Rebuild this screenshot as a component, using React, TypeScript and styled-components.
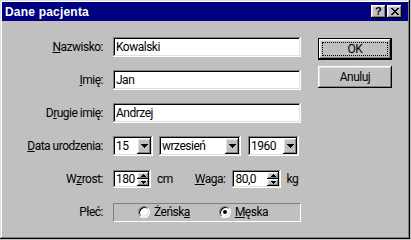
import React from "react";
import styled, { createGlobalStyle } from "styled-components";

const GlobalStyle = createGlobalStyle`
  html, body { margin: 0; padding: 0; background: #c0c0c0; }
  body {
    font-family: Roboto, "Liberation Sans", Arial, sans-serif;
    font-size: 12px;
    letter-spacing: -0.5px;
    color: #000;
  }
`;

const raisedShadow =
  "inset -1px -1px #000, inset 1px 1px #fff, inset -2px -2px #808080, inset 2px 2px #dfdfdf";
const sunkenShadow =
  "inset -1px -1px #fff, inset 1px 1px #808080, inset -2px -2px #dfdfdf, inset 2px 2px #000";

const Window = styled.div`
  box-sizing: border-box;
  width: 410px;
  height: 239px;
  padding: 2px;
  background: #c0c0c0;
  box-shadow: inset -1px -1px #000, inset 1px 1px #dfdfdf, inset -2px -2px #808080,
    inset 2px 2px #fff;
  display: flex;
  flex-direction: column;
`;

const TitleBar = styled.div`
  height: 19px;
  flex: none;
  background: #000080;
  color: #fff;
  display: flex;
  align-items: center;
  padding: 0 6px 0 3px;
  font-family: "Liberation Sans", Arial, sans-serif;
  font-weight: bold;
  font-size: 12px;
  letter-spacing: 0.2px;
`;

const TitleText = styled.span`
  flex: 1;
`;

const CaptionButtons = styled.div`
  display: flex;
  gap: 1px;
`;

const CaptionButton = styled.div`
  box-sizing: border-box;
  width: 15px;
  height: 13px;
  background: #c0c0c0;
  box-shadow: ${raisedShadow};
  display: flex;
  align-items: center;
  justify-content: center;
  color: #000;
  font-weight: bold;
  font-size: 11px;
  line-height: 1;
  padding-bottom: 1px;
`;

const Body = styled.div`
  flex: 1;
  display: flex;
  align-items: flex-start;
  padding-top: 16px;
`;

const Form = styled.div`
  display: grid;
  grid-template-columns: 101px 188px;
  grid-auto-rows: 20px;
  column-gap: 10px;
  row-gap: 13px;
  align-items: center;
`;

const Label = styled.div`
  text-align: right;
  white-space: nowrap;
`;

const TextBox = styled.div`
  box-sizing: border-box;
  height: 20px;
  background: #fff;
  box-shadow: ${sunkenShadow};
  padding: 0 3px;
  display: flex;
  align-items: center;
  white-space: nowrap;
`;

const Inline = styled.div`
  display: flex;
  align-items: center;
`;

const Combo = styled.div<{ $w: number; $gap?: number }>`
  box-sizing: border-box;
  width: ${(p) => p.$w}px;
  height: 20px;
  margin-left: ${(p) => p.$gap ?? 0}px;
  background: #fff;
  box-shadow: ${sunkenShadow};
  padding: 2px;
  display: flex;
  align-items: center;
`;

const FieldValue = styled.span`
  flex: 1;
  padding-left: 1px;
  white-space: nowrap;
  overflow: hidden;
`;

const DropButton = styled.div`
  box-sizing: border-box;
  width: 14px;
  height: 16px;
  background: #c0c0c0;
  box-shadow: ${raisedShadow};
  display: flex;
  align-items: center;
  justify-content: center;
`;

const Spin = styled.div<{ $w: number }>`
  box-sizing: border-box;
  width: ${(p) => p.$w}px;
  height: 18px;
  background: #fff;
  box-shadow: ${sunkenShadow};
  padding: 2px;
  display: flex;
  align-items: center;
`;

const SpinButtons = styled.div`
  width: 12px;
  height: 14px;
  display: flex;
  flex-direction: column;
`;

const SpinHalf = styled.div`
  box-sizing: border-box;
  flex: 1;
  background: #c0c0c0;
  box-shadow: ${raisedShadow};
  display: flex;
  align-items: center;
  justify-content: center;
`;

const Unit = styled.span<{ $gap: number }>`
  margin-left: ${(p) => p.$gap}px;
  white-space: nowrap;
`;

const InlineLabel = styled.span<{ $gap: number }>`
  margin-left: ${(p) => p.$gap}px;
  margin-right: 7px;
  white-space: nowrap;
`;

const RadioGroup = styled.div`
  box-sizing: border-box;
  height: 19px;
  border-top: 1px solid #808080;
  border-left: 1px solid #808080;
  border-bottom: 1px solid #fff;
  border-right: 1px solid #fff;
  display: flex;
  align-items: center;
  padding-left: 24px;
  gap: 29px;
`;

const RadioOption = styled.div`
  display: flex;
  align-items: center;
  gap: 4px;
  white-space: nowrap;
`;

const RadioCircle = styled.span<{ $checked?: boolean }>`
  box-sizing: border-box;
  width: 12px;
  height: 12px;
  border-radius: 50%;
  background: #fff;
  border: 1px solid;
  border-color: #808080 #fff #fff #808080;
  box-shadow: inset 1px 1px #000, inset -1px -1px #dfdfdf;
  display: flex;
  align-items: center;
  justify-content: center;
  &::after {
    content: "";
    display: ${(p) => (p.$checked ? "block" : "none")};
    width: 4px;
    height: 4px;
    border-radius: 50%;
    background: #000;
  }
`;

const ButtonColumn = styled.div`
  margin-left: 17px;
  margin-top: 1px;
  display: flex;
  flex-direction: column;
  gap: 6px;
`;

const Button = styled.div<{ $default?: boolean }>`
  box-sizing: border-box;
  width: 74px;
  height: 22px;
  background: #c0c0c0;
  box-shadow: ${(p) =>
    p.$default
      ? "inset 0 0 0 1px #000, inset -2px -2px #000, inset 2px 2px #fff, inset -3px -3px #808080, inset 3px 3px #dfdfdf"
      : raisedShadow};
  display: flex;
  align-items: stretch;
  justify-content: stretch;
  padding: 4px;
`;

const ButtonFace = styled.span<{ $focus?: boolean }>`
  flex: 1;
  box-sizing: border-box;
  border: 1px dotted ${(p) => (p.$focus ? "#000" : "transparent")};
  display: flex;
  align-items: center;
  justify-content: center;
`;

const DownArrow = () => (
  <svg width="7" height="4" viewBox="0 0 7 4" shapeRendering="crispEdges">
    <path d="M0 0h7v1h-1v1h-1v1h-1v1h-1v-1h-1v-1h-1v-1h-1z" fill="#000" />
  </svg>
);

const SpinArrow = ({ up }: { up?: boolean }) => (
  <svg width="5" height="3" viewBox="0 0 5 3" shapeRendering="crispEdges">
    {up ? (
      <path d="M2 0h1v1h1v1h1v1h-5v-1h1v-1h1z" fill="#000" />
    ) : (
      <path d="M0 0h5v1h-1v1h-1v1h-1v-1h-1v-1h-1z" fill="#000" />
    )}
  </svg>
);

const closeRows = [
  "11000011",
  "01100110",
  "00111100",
  "00011000",
  "00111100",
  "01100110",
  "11000011",
];

const CloseGlyph = () => (
  <svg width="8" height="7" viewBox="0 0 8 7" shapeRendering="crispEdges">
    {closeRows.map((row, y) =>
      row.split("").map((c, x) =>
        c === "1" ? <rect key={`${x}-${y}`} x={x} y={y} width="1" height="1" fill="#000" /> : null
      )
    )}
  </svg>
);

const ComboBox = ({ value, w, gap }: { value: string; w: number; gap?: number }) => (
  <Combo $w={w} $gap={gap}>
    <FieldValue>{value}</FieldValue>
    <DropButton>
      <DownArrow />
    </DropButton>
  </Combo>
);

const SpinBox = ({ value, w }: { value: string; w: number }) => (
  <Spin $w={w}>
    <FieldValue>{value}</FieldValue>
    <SpinButtons>
      <SpinHalf>
        <SpinArrow up />
      </SpinHalf>
      <SpinHalf>
        <SpinArrow />
      </SpinHalf>
    </SpinButtons>
  </Spin>
);

export default function App() {
  return (
    <>
      <GlobalStyle />
      <Window>
        <TitleBar>
          <TitleText>Dane pacjenta</TitleText>
          <CaptionButtons>
            <CaptionButton>?</CaptionButton>
            <CaptionButton>
              <CloseGlyph />
            </CaptionButton>
          </CaptionButtons>
        </TitleBar>
        <Body>
          <Form>
            <Label>
              <u>N</u>azwisko:
            </Label>
            <TextBox>Kowalski</TextBox>

            <Label>
              <u>I</u>mię:
            </Label>
            <TextBox>Jan</TextBox>

            <Label>
              D<u>r</u>ugie imię:
            </Label>
            <TextBox>Andrzej</TextBox>

            <Label>
              <u>D</u>ata urodzenia:
            </Label>
            <Inline>
              <ComboBox value="15" w={40} />
              <ComboBox value="wrzesień" w={82} gap={6} />
              <ComboBox value="1960" w={51} gap={7} />
            </Inline>

            <Label>
              W<u>z</u>rost:
            </Label>
            <Inline>
              <SpinBox value="180" w={38} />
              <Unit $gap={6}>cm</Unit>
              <InlineLabel $gap={22}>
                <u>W</u>aga:
              </InlineLabel>
              <SpinBox value="80,0" w={49} />
              <Unit $gap={5}>kg</Unit>
            </Inline>

            <Label>Płeć:</Label>
            <RadioGroup>
              <RadioOption>
                <RadioCircle />
                <span>
                  Żeńsk<u>a</u>
                </span>
              </RadioOption>
              <RadioOption>
                <RadioCircle $checked />
                <span>
                  <u>M</u>ęska
                </span>
              </RadioOption>
            </RadioGroup>
          </Form>
          <ButtonColumn>
            <Button $default>
              <ButtonFace $focus>OK</ButtonFace>
            </Button>
            <Button>
              <ButtonFace>Anuluj</ButtonFace>
            </Button>
          </ButtonColumn>
        </Body>
      </Window>
    </>
  );
}
